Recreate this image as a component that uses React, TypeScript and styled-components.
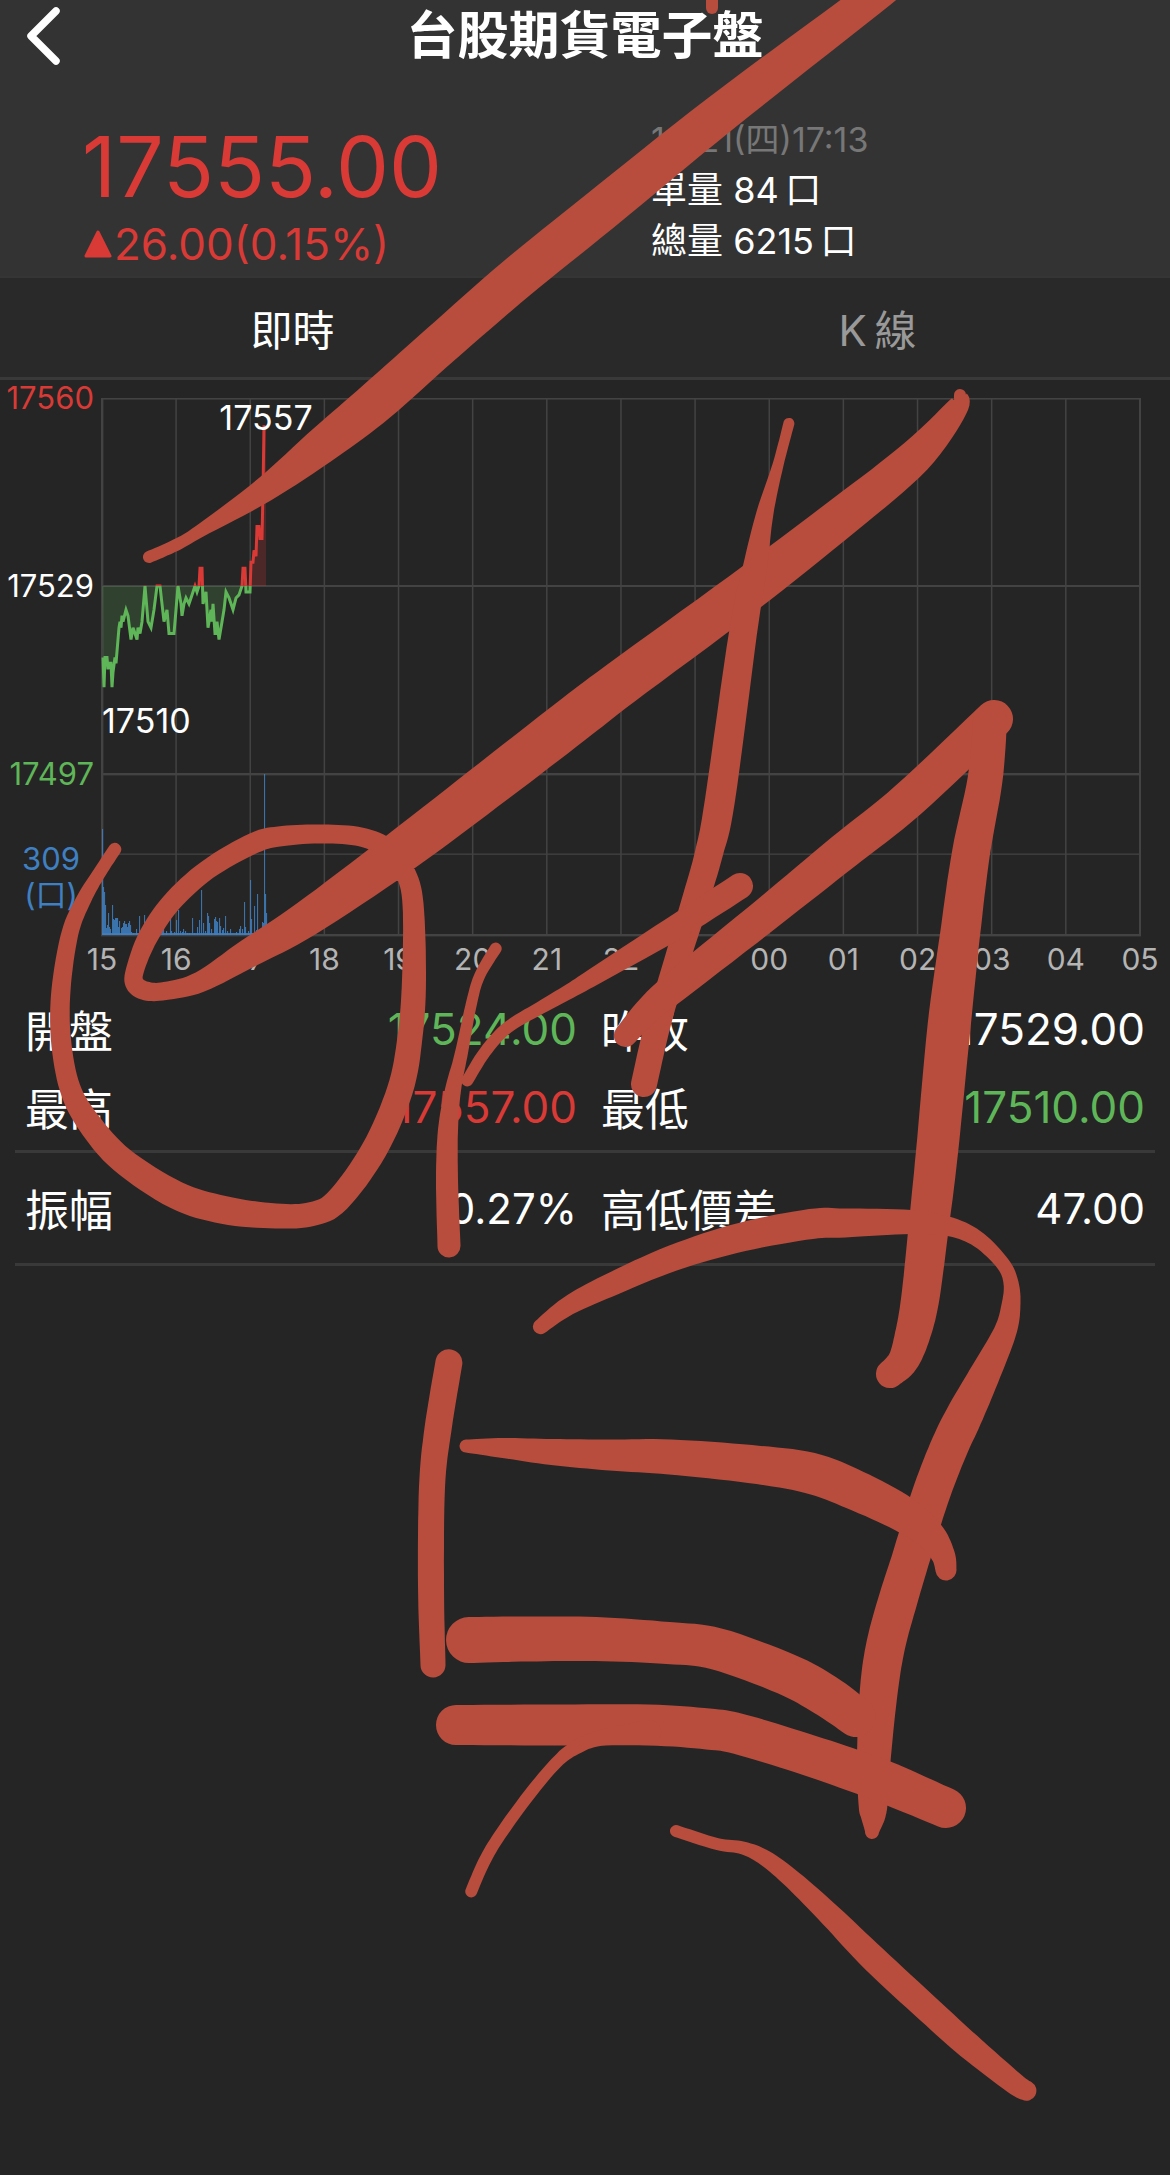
import React from "react";
import styled, { createGlobalStyle } from "styled-components";

const colors = {
  header: "#333333",
  tabs: "#292929",
  page: "#252525",
  line: "#393939",
  grid: "#434343",
  up: "#d93a36",
  down: "#5fb658",
  volume: "#3f80c2",
  muted: "#777777",
  tabOff: "#999999",
  axis: "#b4b4b4",
  ink: "#b84d3d",
};

const fontStack = `Inter, "Noto Sans CJK TC", sans-serif`;

const GlobalStyle = createGlobalStyle`
  html, body { margin: 0; background: ${colors.page}; }
  body { font-family: ${fontStack}; color: #fff; }
  * { box-sizing: border-box; }
`;

const Page = styled.div`
  position: relative;
  width: 100%;
  min-height: 100vh;
  overflow: hidden;
  background: ${colors.page};
`;

const Header = styled.header`
  background: ${colors.header};
  border-bottom: 2px solid #353535;
`;

const TitleBar = styled.div`
  display: grid;
  grid-template-columns: 120px 1fr 120px;
  align-items: center;
  height: 70px;
`;

const BackButton = styled.button`
  display: flex;
  align-items: center;
  height: 70px;
  padding: 0 0 0 24px;
  border: 0;
  background: none;
`;

const Title = styled.h1`
  margin: 0;
  text-align: center;
  font-size: 51px;
  line-height: 72px;
  font-weight: 700;
`;

const Quote = styled.section`
  display: grid;
  grid-template-columns: 651fr 519fr;
  padding: 44px 0 8px;
`;

const PriceBlock = styled.div`
  padding: 0 0 0 82px;
  color: ${colors.up};
`;

const Price = styled.div`
  font-size: 84px;
  line-height: 106px;
`;

const Change = styled.div`
  display: flex;
  align-items: center;
  font-size: 44px;
  line-height: 48px;
`;

const Facts = styled.div`
  font-size: 36px;
  line-height: 51px;
`;

const Stamp = styled.div`
  font-size: 34px;
  color: ${colors.muted};
`;

const Tabs = styled.nav`
  display: flex;
  background: ${colors.tabs};
  border-bottom: 3px solid ${colors.line};
`;

const Tab = styled.button<{ $active?: boolean }>`
  flex: 1;
  height: 99px;
  padding: 0;
  border: 0;
  background: none;
  font-family: ${fontStack};
  font-size: 42px;
  color: ${(p) => (p.$active ? "#fff" : colors.tabOff)};
`;

const ChartSvg = styled.svg`
  display: block;
  width: 100%;
  height: auto;
  font-family: ${fontStack};
`;

const StatGroup = styled.dl<{ $pad: number; $valueSize: number }>`
  display: grid;
  grid-template-columns: 1fr 1fr;
  margin: 0 15px;
  padding: ${(p) => p.$pad}px 0;
  border-bottom: 3px solid ${colors.line};
  dd {
    font-size: ${(p) => p.$valueSize}px;
  }
`;

const Stat = styled.div`
  display: flex;
  justify-content: space-between;
  align-items: center;
  height: 78px;
  padding: 0 8px 0 10px;
  font-size: 44px;
  &:nth-child(even) {
    padding: 0 10px 0 16px;
  }
`;

const StatLabel = styled.dt`
  margin: 0;
`;

const StatValue = styled.dd<{ $color?: string }>`
  margin: 0;
  color: ${(p) => p.$color ?? "#fff"};
`;

const InkLayer = styled.svg`
  position: absolute;
  top: 0;
  left: 0;
  width: 100%;
  height: auto;
  pointer-events: none;
`;

/* ---------- intraday chart ---------- */

const BASE_Y = 206;
const POINT_PX = 5.95;

// x position, points above or below the previous close
const ticks: [number, number][] = [
  [103, -12], [104, -17], [105, -12], [107, -12], [108, -14], [109, -13], [111, -13], [112, -17],
  [113, -14.5], [115, -12], [116, -13], [119, -7], [120, -6], [121, -7], [122, -5], [123, -6],
  [126, -4], [128, -5], [131, -9], [133, -7], [135, -8], [137, -9], [138, -7], [140, -8],
  [142, -6], [145, 0], [148, -6], [151, -7], [154, -4], [157, 0], [160, 0], [162, -3],
  [164, -6], [167, -4], [169, -8], [174, -8], [176, -4], [178, 0], [181, -3], [182, -5],
  [184, -3], [186, -2], [189, -3], [191, -2], [193, -1], [195, 0], [197, -1], [199, 0],
  [200, 3], [202, 3], [203, -3], [206, -1], [208, -7], [211, -4], [212, -6], [213, -3],
  [215, -8], [216, -8], [217, -6], [219, -9], [222, -6], [224, -4], [226, -1], [229, -2],
  [231, -3], [233, -4], [236, -2], [239, -1.5], [242, 0], [243, 3], [245, 3], [246, -1],
  [250, -1], [251, 4], [253, 4], [254, 6], [256, 5], [257, 10], [259, 10], [260, 8],
  [262, 8], [263, 16], [264, 27],
];

// x position, bar height
const volumes: [number, number][] = [
  [102, 106], [103, 48], [104, 43], [105, 30], [106, 7], [107, 10], [108, 22], [109, 8], [110, 6],
  [112, 30], [113, 16], [114, 15], [115, 17], [116, 17], [117, 17], [118, 8], [119, 14], [121, 7],
  [122, 8], [123, 12], [124, 14], [125, 11], [126, 11], [127, 8], [128, 12], [129, 14], [130, 10],
  [131, 3], [133, 2], [136, 6], [139, 19], [141, 4], [144, 20], [147, 5], [150, 4], [153, 8],
  [156, 4], [159, 6], [162, 12], [163, 8], [166, 4], [170, 16], [171, 4], [174, 3], [176, 15],
  [178, 25], [180, 4], [182, 3], [183, 6], [185, 4], [187, 2], [189, 2], [192, 17], [194, 2],
  [197, 8], [199, 15], [201, 45], [203, 12], [205, 4], [207, 22], [208, 19], [209, 12], [211, 6],
  [214, 16], [215, 18], [216, 14], [217, 13], [219, 17], [220, 9], [222, 5], [223, 7], [225, 19],
  [227, 4], [230, 6], [236, 3], [239, 6], [240, 9], [242, 6], [244, 33], [245, 8], [248, 4],
  [250, 55], [251, 16], [254, 29], [256, 5], [257, 41], [259, 4], [261, 5], [262, 13], [263, 12],
  [264, 161], [265, 41], [266, 22],
];

const hours = ["15", "16", "17", "18", "19", "20", "21", "22", "23", "00", "01", "02", "03", "04", "05"];
const hourX = (i: number) => 102 + (i * 1038) / 14;

const linePath = "M" + ticks.map(([x, d]) => `${x} ${BASE_Y - d * POINT_PX}`).join("L");
const areaPath = `M102 ${BASE_Y}L${linePath.slice(1)}H266V${BASE_Y}Z`;

function Chart() {
  return (
    <ChartSvg viewBox="0 0 1170 606" role="img" aria-label="即時走勢圖">
      <defs>
        <clipPath id="above"><rect x="0" y="0" width="1170" height={BASE_Y} /></clipPath>
        <clipPath id="below"><rect x="0" y={BASE_Y} width="1170" height="400" /></clipPath>
      </defs>
      <g fill={colors.grid}>
        {hours.slice(1, -1).map((h, i) => (
          <rect key={h} x={hourX(i + 1) - 0.8} y="19" width="1.5" height="536" />
        ))}
        <rect x="101" y="18" width="1040" height="1.6" />
        <rect x="101" y="205" width="1040" height="2" />
        <rect x="101" y="393" width="1040" height="2.4" />
        <rect x="101" y="473.5" width="1040" height="1.3" />
        <rect x="101" y="554" width="1040" height="2.4" />
        <rect x="101" y="18" width="2.4" height="538" />
        <rect x="1139" y="18" width="2" height="538" />
      </g>
      <g fill={colors.volume}>
        {volumes.map(([x, h]) => (
          <rect key={x} x={x} y={555 - h} width="1.1" height={h} opacity="0.85" />
        ))}
        <rect x="102" y="553" width="165" height="2" opacity="0.9" />
      </g>
      <g clipPath="url(#below)">
        <path d={areaPath} fill={colors.down} opacity="0.2" />
        <path d={linePath} fill="none" stroke={colors.down} strokeWidth="3" />
      </g>
      <g clipPath="url(#above)">
        <path d={areaPath} fill={colors.up} opacity="0.22" />
        <path d={linePath} fill="none" stroke={colors.up} strokeWidth="3" />
      </g>
      <g fontSize="31" textAnchor="end">
        <text x="94" y="29" fill={colors.up}>17560</text>
        <text x="94" y="217" fill="#fff">17529</text>
        <text x="94" y="405" fill={colors.down}>17497</text>
      </g>
      <g fontSize="31" textAnchor="middle" fill={colors.volume}>
        <text x="51" y="490">309</text>
        <text x="51" y="526">(口)</text>
      </g>
      <g fontSize="34" fill="#fff">
        <text x="266" y="50" textAnchor="middle">17557</text>
        <text x="102" y="353">17510</text>
      </g>
      <g fontSize="30" textAnchor="middle" fill={colors.axis}>
        {hours.map((h, i) => (
          <text key={h} x={hourX(i)} y="590">{h}</text>
        ))}
      </g>
    </ChartSvg>
  );
}

/* ---------- hand-drawn ink ---------- */

type Sample = [x: number, y: number, width: number];

const strokes: Sample[][] = [
  [[712, -20, 12], [712, 8, 12]],
  [[920, -40, 32], [869, 0, 34], [720, 114, 40], [600, 211, 43], [517, 278, 43], [440, 345, 42], [377, 401, 42],
    [325, 443, 37], [264, 490, 25], [200, 531, 13], [176, 545, 12], [149, 557, 12]],
  [[960, 395, 12], [957, 408, 22], [915, 457, 35], [843, 516, 40], [742, 594, 44], [621, 683, 46], [570, 722, 47],
    [495, 780, 46], [399, 853, 43], [306, 919, 36], [249, 953, 29], [200, 982, 21], [165, 991, 18], [146, 991, 19],
    [135, 984, 19], [135, 970, 18], [148, 937, 20], [171, 903, 20], [207, 870, 20], [254, 843, 21], [283, 836, 20],
    [323, 834, 19], [361, 837, 19], [388, 849, 20], [405, 872, 20], [413, 904, 21], [414, 980, 24], [410, 1037, 25],
    [400, 1090, 26], [374, 1150, 26], [338, 1200, 25], [312, 1214, 24], [276, 1216, 25], [224, 1210, 28],
    [176, 1195, 28], [122, 1160, 26], [89, 1123, 24], [70, 1088, 21], [61, 1040, 20], [61, 990, 19], [70, 933, 17],
    [84, 899, 15], [100, 872, 13], [115, 849, 13]],
  [[789, 423, 11], [778, 465, 11], [765, 513, 17], [755, 567, 24], [743, 633, 28], [720, 800, 30], [709, 853, 28],
    [694, 905, 27], [671, 980, 25], [657, 1027, 26], [644, 1084, 26]],
  [[994, 719, 38], [908, 800, 38], [843, 852, 37], [769, 912, 34], [681, 982, 31], [650, 1008, 27], [625, 1036, 23]],
  [[990, 722, 34], [985, 780, 35], [971, 853, 38], [960, 935, 40], [949, 1027, 43], [937, 1152, 42],
    [928, 1233, 40], [920, 1300, 38], [912, 1337, 35], [903, 1361, 31], [890, 1374, 28]],
  [[540, 1327, 15], [568, 1306, 19], [608, 1286, 23], [673, 1258, 26], [742, 1237, 29], [811, 1224, 30],
    [845, 1223, 29], [911, 1222, 24], [951, 1227, 19], [979, 1240, 16], [1003, 1264, 14], [1011, 1283, 15],
    [1011, 1305, 19], [1005, 1332, 23], [984, 1376, 31], [964, 1416, 37], [948, 1450, 38], [930, 1497, 38],
    [910, 1561, 38], [898, 1600, 39], [886, 1644, 39], [879, 1689, 38], [874, 1755, 34], [873, 1804, 29],
    [873, 1818, 24], [872, 1832, 14]],
  [[496, 948, 12], [480, 975, 11], [472, 1001, 11], [461, 1055, 13], [453, 1090, 16], [448, 1130, 20],
    [447, 1180, 22], [449, 1246, 23]],
  [[740, 886, 26], [681, 924, 25], [600, 973, 18], [570, 991, 15], [540, 1008, 13], [507, 1028, 12],
    [485, 1052, 12], [467, 1081, 12]],
  [[449, 1362, 27], [438, 1429, 27], [432, 1487, 26], [431, 1586, 26], [433, 1665, 25]],
  [[466, 1446, 13], [503, 1448, 20], [552, 1452, 26], [610, 1455, 31], [670, 1457, 35], [750, 1464, 38],
    [810, 1473, 41], [855, 1490, 40], [903, 1514, 36], [930, 1535, 30], [943, 1555, 24], [946, 1570, 21]],
  [[469, 1640, 46], [529, 1639, 45], [596, 1639, 44], [668, 1643, 42], [717, 1649, 42], [786, 1674, 42],
    [825, 1695, 42], [856, 1717, 40]],
  [[456, 1725, 40], [550, 1725, 41], [648, 1725, 41], [708, 1729, 41], [739, 1734, 41], [802, 1753, 41],
    [858, 1772, 42], [890, 1784, 42], [946, 1808, 40]],
  [[471, 1892, 12], [484, 1862, 12], [500, 1835, 12], [529, 1795, 12], [556, 1763, 12], [575, 1748, 14],
    [600, 1738, 16], [650, 1732, 24]],
  [[676, 1831, 12], [717, 1844, 12], [743, 1848, 13], [765, 1858, 16], [793, 1880, 19], [831, 1916, 23],
    [874, 1959, 27], [929, 2010, 27], [969, 2046, 26], [1014, 2083, 22], [1027, 2091, 20]],
];

const catmull = (a: number, b: number, c: number, d: number, t: number) =>
  0.5 * (2 * b + (c - a) * t + (2 * a - 5 * b + 4 * c - d) * t * t + (3 * b - a - 3 * c + d) * t * t * t);

// Turns pen samples of varying width into one closed outline.
function outline(samples: Sample[]): string {
  const pts: Sample[] = [];
  const at = (i: number) => samples[Math.max(0, Math.min(samples.length - 1, i))];
  for (let i = 0; i < samples.length - 1; i++) {
    for (let s = 0; s < 8; s++) {
      pts.push([0, 1, 2].map((k) => catmull(at(i - 1)[k], at(i)[k], at(i + 1)[k], at(i + 2)[k], s / 8)) as Sample);
    }
  }
  pts.push(samples[samples.length - 1]);
  const left: string[] = [];
  const right: string[] = [];
  pts.forEach(([x, y, w], i) => {
    const p = pts[Math.max(0, i - 1)];
    const n = pts[Math.min(pts.length - 1, i + 1)];
    const len = Math.hypot(n[0] - p[0], n[1] - p[1]) || 1;
    const ox = (-(n[1] - p[1]) / len) * (w / 2);
    const oy = ((n[0] - p[0]) / len) * (w / 2);
    left.push(`${(x + ox).toFixed(1)} ${(y + oy).toFixed(1)}`);
    right.unshift(`${(x - ox).toFixed(1)} ${(y - oy).toFixed(1)}`);
  });
  const r0 = samples[0][2] / 2;
  const r1 = samples[samples.length - 1][2] / 2;
  return `M${left.join("L")}A${r1} ${r1} 0 0 0 ${right.join("L")}A${r0} ${r0} 0 0 0 ${left[0]}Z`;
}

function Ink() {
  return (
    <InkLayer viewBox="0 0 1170 2175" fill={colors.ink} aria-hidden="true">
      {strokes.map((s, i) => (
        <path key={i} d={outline(s)} />
      ))}
    </InkLayer>
  );
}

/* ---------- page ---------- */

type StatItem = { label: string; value: string; color?: string };

const sessionStats: StatItem[] = [
  { label: "開盤", value: "17524.00", color: colors.down },
  { label: "昨收", value: "17529.00" },
  { label: "最高", value: "17557.00", color: colors.up },
  { label: "最低", value: "17510.00", color: colors.down },
];

const rangeStats: StatItem[] = [
  { label: "振幅", value: "0.27%" },
  { label: "高低價差", value: "47.00" },
];

function Stats({ items, pad, valueSize }: { items: StatItem[]; pad: number; valueSize: number }) {
  return (
    <StatGroup $pad={pad} $valueSize={valueSize}>
      {items.map((s) => (
        <Stat key={s.label}>
          <StatLabel>{s.label}</StatLabel>
          <StatValue $color={s.color}>{s.value}</StatValue>
        </Stat>
      ))}
    </StatGroup>
  );
}

export default function App() {
  return (
    <Page lang="zh-Hant">
      <GlobalStyle />
      <Header>
        <TitleBar>
          <BackButton type="button" aria-label="返回">
            <svg width="40" height="66" viewBox="0 0 40 66" fill="none">
              <path d="M32 8L7 33L32 58" stroke="#fff" strokeWidth="7.5" strokeLinecap="round" strokeLinejoin="round" />
            </svg>
          </BackButton>
          <Title>台股期貨電子盤</Title>
        </TitleBar>
        <Quote>
          <PriceBlock>
            <Price>17555.00</Price>
            <Change>
              <svg width="32" height="32" viewBox="0 0 32 32" aria-hidden="true">
                <path d="M16 4L28 28H4Z" fill={colors.up} stroke={colors.up} strokeWidth="3" strokeLinejoin="round" />
              </svg>
              26.00(0.15%)
            </Change>
          </PriceBlock>
          <Facts>
            <Stamp>10/21(四)17:13</Stamp>
            <div>單量 84{"\u2009"}口</div>
            <div>總量 6215{"\u2009"}口</div>
          </Facts>
        </Quote>
      </Header>
      <Tabs>
        <Tab type="button" $active>即時</Tab>
        <Tab type="button">K{"\u2009"}線</Tab>
      </Tabs>
      <Chart />
      <Stats items={sessionStats} pad={4} valueSize={44} />
      <Stats items={rangeStats} pad={16} valueSize={42} />
      <Ink />
    </Page>
  );
}
